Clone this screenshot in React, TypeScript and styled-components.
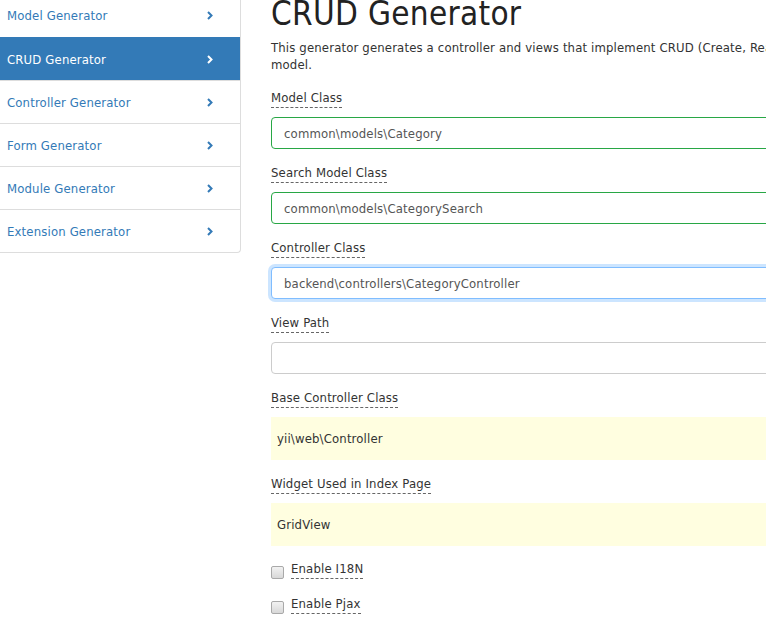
import React, { ReactElement } from 'react'
import styled, { createGlobalStyle } from 'styled-components'

const GlobalStyle = createGlobalStyle`
  html, body {
    margin: 0;
    padding: 0;
    background: #fff;
    overflow: hidden;
  }
  body {
    font-family: "DejaVu Sans Condensed", "DejaVu Sans", Tahoma, sans-serif;
    font-size: 13px;
    letter-spacing: 0.15px;
    color: #333;
  }
`

const Page = styled.div`
  display: flex;
  align-items: flex-start;
  width: 1200px;
  height: 623px;
  overflow: hidden;
`

const Sidebar = styled.nav`
  display: flex;
  flex-direction: column;
  width: 250px;
  margin: -6px 0 0 -9px;
  border: 1px solid #ddd;
  border-top: none;
  border-radius: 0 0 4px 4px;
  box-sizing: border-box;
  flex-shrink: 0;
`

const NavItem = styled.a<{ $active?: boolean }>`
  display: flex;
  align-items: center;
  justify-content: space-between;
  height: 43px;
  box-sizing: border-box;
  padding: 0 27px 0 15px;
  border-top: 1px solid ${(p) => (p.$active ? '#337ab7' : '#ddd')};
  background: ${(p) => (p.$active ? '#337ab7' : 'transparent')};
  color: ${(p) => (p.$active ? '#fff' : '#337ab7')};
  text-decoration: none;
  &:first-child {
    border-top: none;
  }
`

const Main = styled.main`
  margin-left: 30px;
  width: 850px;
  flex-shrink: 0;
`

const Title = styled.h1`
  margin: -4px 0 7px;
  font-size: 33px;
  line-height: 36px;
  font-weight: normal;
  letter-spacing: 0.3px;
  color: #222;
`

const Intro = styled.p`
  margin: 0 0 16px;
  line-height: 17px;
`

const Field = styled.div`
  display: flex;
  flex-direction: column;
  align-items: flex-start;
  margin-bottom: 15px;
`

const Label = styled.label`
  display: inline-block;
  line-height: 18px;
  border-bottom: 1px dashed #666;
  margin-bottom: 9px;
  color: #333;
`

const Input = styled.input<{ $state?: 'success' | 'focus' }>`
  width: 100%;
  height: 32px;
  box-sizing: border-box;
  padding: 0 12px;
  font: inherit;
  letter-spacing: inherit;
  color: #555;
  border-radius: 4px;
  outline: none;
  border: 1px solid
    ${(p) => (p.$state === 'success' ? '#28a745' : p.$state === 'focus' ? '#80bdff' : '#ccc')};
  box-shadow: ${(p) => (p.$state === 'focus' ? '0 0 0 3px rgba(0, 123, 255, 0.2)' : 'none')};
`

const Sticky = styled.div`
  display: flex;
  align-items: center;
  width: 100%;
  height: 43px;
  padding-left: 6px;
  box-sizing: border-box;
  background: #fffee0;
  color: #333;
`

const CheckRow = styled.div<{ $first?: boolean }>`
  display: flex;
  align-items: flex-start;
  margin-top: ${(p) => (p.$first ? '-1px' : '16px')};
`

const Box = styled.span`
  width: 13px;
  height: 13px;
  margin-top: 6px;
  margin-right: 7px;
  box-sizing: border-box;
  border: 1px solid #a9a9a9;
  border-radius: 2px;
  background: linear-gradient(#f2f2f2, #d8d8d8);
`

const CheckLabel = styled.span`
  line-height: 18px;
  border-bottom: 1px dashed #666;
`

function Chevron(): ReactElement {
  return (
    <svg width="6" height="9" viewBox="0 0 6 9">
      <polyline points="1,1 4.5,4.5 1,8" fill="none" stroke="currentColor" strokeWidth="2" />
    </svg>
  )
}

const generators = [
  'Model Generator',
  'CRUD Generator',
  'Controller Generator',
  'Form Generator',
  'Module Generator',
  'Extension Generator',
]

export default function App(): ReactElement {
  return (
    <Page>
      <GlobalStyle />
      <Sidebar>
        {generators.map((g) => (
          <NavItem key={g} $active={g === 'CRUD Generator'}>
            {g}
            <Chevron />
          </NavItem>
        ))}
      </Sidebar>
      <Main>
        <Title>CRUD Generator</Title>
        <Intro>
          This generator generates a controller and views that implement CRUD (Create, Read, Update, Delete)
          operations for the specified data model.
        </Intro>
        <Field>
          <Label>Model Class</Label>
          <Input $state="success" defaultValue="common\models\Category" />
        </Field>
        <Field>
          <Label>Search Model Class</Label>
          <Input $state="success" defaultValue="common\models\CategorySearch" />
        </Field>
        <Field>
          <Label>Controller Class</Label>
          <Input $state="focus" defaultValue="backend\controllers\CategoryController" />
        </Field>
        <Field>
          <Label>View Path</Label>
          <Input defaultValue="" />
        </Field>
        <Field>
          <Label>Base Controller Class</Label>
          <Sticky>yii\web\Controller</Sticky>
        </Field>
        <Field>
          <Label>Widget Used in Index Page</Label>
          <Sticky>GridView</Sticky>
        </Field>
        <CheckRow $first>
          <Box />
          <CheckLabel>Enable I18N</CheckLabel>
        </CheckRow>
        <CheckRow>
          <Box />
          <CheckLabel>Enable Pjax</CheckLabel>
        </CheckRow>
      </Main>
    </Page>
  )
}
